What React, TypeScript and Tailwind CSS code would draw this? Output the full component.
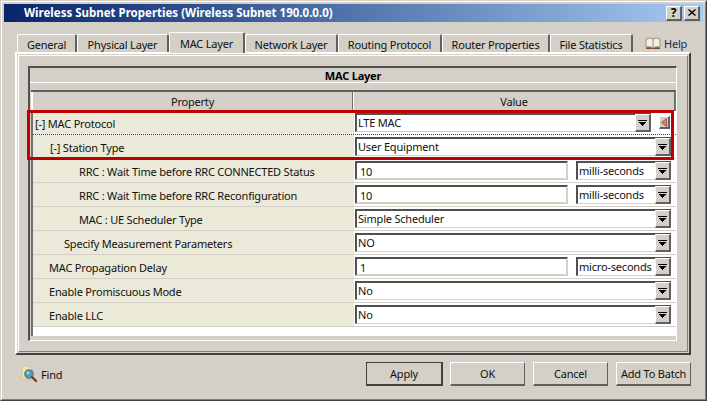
const font = "font-['Noto_Sans',sans-serif]";

function Arrow() {
  return (
    <svg width="9" height="6" viewBox="0 0 9 6" className="block">
      <rect x="0" y="0" width="9" height="1" fill="#000" />
      <path d="M1 2h7v1H7v1H6v1H5v1H4V5H3V4H2V3H1z" fill="#000" />
    </svg>
  );
}

function Raised({ className, children }: { className?: string; children?: React.ReactNode }) {
  return (
    <div className={`flex items-center justify-center border-t border-l border-t-white border-l-white border-r-2 border-b-2 border-r-[#606060] border-b-[#606060] bg-[#d4d0c8] ${className ?? ""}`}>
      {children}
    </div>
  );
}

function Select({ value, className }: { value: string; className?: string }) {
  return (
    <div className={`flex h-[19px] items-stretch border-t-2 border-l-2 border-t-[#505050] border-l-[#505050] border-b border-b-[#d4d0c8] bg-white ${className ?? ""}`}>
      <span className="flex-1 truncate pl-px leading-[16px] text-[#111]">{value}</span>
      <Raised className="my-[-1px] w-[16px] shrink-0"><Arrow /></Raised>
    </div>
  );
}

function Input({ value }: { value: string }) {
  return (
    <div className="h-[19px] w-[213px] shrink-0 border-t-2 border-l-2 border-t-[#505050] border-l-[#505050] border-r-2 border-b-2 border-r-[#d4d0c8] border-b-[#d4d0c8] bg-white pl-[3px] leading-[18px] text-[#111]">
      {value}
    </div>
  );
}

type Row = {
  label: string;
  indent: number;
  value: string;
  unit?: string;
  kind?: "protocol";
};

const rows: Row[] = [
  { label: "[-] MAC Protocol", indent: 2, value: "LTE MAC", kind: "protocol" },
  { label: "[-] Station Type", indent: 17, value: "User Equipment" },
  { label: "RRC : Wait Time before RRC CONNECTED Status", indent: 46, value: "10", unit: "milli-seconds" },
  { label: "RRC : Wait Time before RRC Reconfiguration", indent: 46, value: "10", unit: "milli-seconds" },
  { label: "MAC : UE Scheduler Type", indent: 46, value: "Simple Scheduler" },
  { label: "Specify Measurement Parameters", indent: 31, value: "NO" },
  { label: "MAC Propagation Delay", indent: 16, value: "1", unit: "micro-seconds" },
  { label: "Enable Promiscuous Mode", indent: 16, value: "No" },
  { label: "Enable LLC", indent: 16, value: "No" },
];

const tabs = [
  { name: "General", w: "w-[60px]" },
  { name: "Physical Layer", w: "w-[92px]" },
  { name: "MAC Layer", w: "w-[76px]", active: true },
  { name: "Network Layer", w: "w-[93px]" },
  { name: "Routing Protocol", w: "w-[104px]" },
  { name: "Router Properties", w: "w-[108px]" },
  { name: "File Statistics", w: "w-[83px]" },
];

function BookIcon() {
  return (
    <svg width="16" height="14" viewBox="0 0 16 14">
      <path d="M1 11 L1 3 Q5 1 8 3 Q11 1 15 3 L15 11 Q11 10 8 12 Q5 10 1 11z" fill="#f4efe0" stroke="#8a7a66" strokeWidth="0.8" />
      <path d="M8 3v9" stroke="#9a8c7a" strokeWidth="1" />
      <path d="M1 11.5 Q5 10.5 8 12.5 Q11 10.5 15 11.5 L15 13 L1 13z" fill="#7a4a2c" />
    </svg>
  );
}

function FindIcon() {
  return (
    <svg width="17" height="18" viewBox="0 0 17 18">
      <path d="M1 1h7l3 3v10H1z" fill="#f3e3b0" stroke="#c8c0a0" strokeWidth="0.8" />
      <circle cx="8" cy="9" r="4.2" fill="#4f9fb4" stroke="#5a7f8c" strokeWidth="1.3" />
      <circle cx="7" cy="8" r="1.4" fill="#a8dbe6" />
      <path d="M11 12l4 4" stroke="#7a3d1a" strokeWidth="2.4" strokeLinecap="round" />
    </svg>
  );
}

function DialogButton({ label, primary }: { label: string; primary?: boolean }) {
  return (
    <div
      className={`flex h-[24px] items-center justify-center bg-[#d4d0c8] text-[#111] ${
        primary
          ? "mr-[-1px] w-[77px] border border-t-[#404040] border-l-[#404040] border-r-2 border-b-2 border-r-[#404040] border-b-[#404040]"
          : "w-[75px] border-t border-l border-t-white border-l-white border-r border-b-2 border-r-[#606060] border-b-[#606060]"
      }`}
    >
      {label}
    </div>
  );
}

export default function App() {
  return (
    <div className={`${font} h-[401px] w-[707px] overflow-hidden border border-[#d4d0c8] border-r-[#404040] border-b-[#404040] bg-[#d4d0c8] text-[11px] leading-none tracking-[-0.2px] text-[#111]`}>
      <div className="flex h-full flex-col border border-white border-r-[#808080] border-b-[#808080] p-[2px]">
        <div className="flex h-[18px] shrink-0 items-center bg-gradient-to-r from-[#0a246a] to-[#a6caf0] pr-[3px] pl-[20px]">
          <span className="flex-1 text-[11.5px] font-bold tracking-normal text-white">Wireless Subnet Properties (Wireless Subnet 190.0.0.0)</span>
          <Raised className="h-[15px] w-[16px] text-[12px] font-bold text-black">?</Raised>
          <Raised className="ml-[2px] h-[15px] w-[16px]">
            <svg width="8" height="7" viewBox="0 0 8 7">
              <path d="M0.5 0.5L7.5 6.5M7.5 0.5L0.5 6.5" stroke="#000" strokeWidth="1.4" />
            </svg>
          </Raised>
        </div>

        <div className="mt-[11px] flex h-[19px] shrink-0 items-end pl-[13px]">
          {tabs.map((tab) => (
            <div
              key={tab.name}
              className={`relative z-10 flex items-center justify-center rounded-t-[2px] border-t border-l border-t-white border-l-white border-r-2 border-r-[#606060] bg-[#d4d0c8] ${tab.w} ${
                tab.active ? "mb-[-1px] h-[21px]" : "h-[18px] pt-[2px]"
              }`}
            >
              {tab.name}
            </div>
          ))}
          <div className="ml-[12px] flex items-center gap-[3px] pb-[2px]">
            <BookIcon />
            <span className="text-[#1a2a50]">Help</span>
          </div>
        </div>

        <div className="ml-[11px] h-[303px] w-[676px] shrink-0 border-t-2 border-l-2 border-t-white border-l-white border-r-2 border-b-2 border-r-[#404040] border-b-[#404040] p-px">
          <div className="h-full w-full border border-white border-r-[#808080] border-b-[#808080] pt-[10px] pr-[9px] pl-[9px]">
            <div className="relative h-[275px] w-[649px] border-t-2 border-l-2 border-t-[#505050] border-l-[#505050] border-r border-b border-r-white border-b-white">
              <div className="flex h-[15px] items-center justify-center border-b border-b-white font-bold text-black">MAC Layer</div>
              <div className="mt-[7px] ml-px flex h-[21px] border-t-2 border-t-[#606060] text-[#111]">
                <div className="flex w-[322px] items-center justify-center border-l-2 border-l-white border-r border-r-[#707070]">Property</div>
                <div className="flex flex-1 items-center justify-center border-l border-l-white border-r-2 border-r-[#707070]">Value</div>
              </div>
              <div className="ml-px border-l-2 border-l-[#707070] bg-white pb-[9px]">
                {rows.map((row, i) => (
                  <div key={row.label} className={`flex h-[24px] ${i === 0 ? "border-b border-dotted border-b-[#404040]" : "border-b border-b-[#d4d0c8]"}`}>
                    <div className="flex w-[320px] items-center bg-[#ebe9d8] pt-px" style={{ paddingLeft: row.indent }}>
                      {row.label}
                    </div>
                    <div className="flex w-[321px] items-center gap-[8px] border-l border-l-[#ebe9d8] pr-[3px] pl-px">
                      {row.unit ? (
                        <>
                          <Input value={row.value} />
                          <Select value={row.unit} className="flex-1" />
                        </>
                      ) : row.kind === "protocol" ? (
                        <>
                          <Select value={row.value} className="flex-1" />
                          <Raised className="mr-px h-[13px] w-[11px] shrink-0">
                            <svg width="6" height="9" viewBox="0 0 6 9">
                              <path d="M5.5 0.5V8.5L0.5 4.5z" fill="#e87878" stroke="#8a3030" strokeWidth="0.7" />
                            </svg>
                          </Raised>
                        </>
                      ) : (
                        <Select value={row.value} className="flex-1" />
                      )}
                    </div>
                  </div>
                ))}
              </div>
              {/* red highlight over the first two rows */}
              <div className="pointer-events-none absolute top-[42px] left-[-3px] h-[50px] w-[647px] border-[3px] border-[#bf0000]" />
            </div>
          </div>
        </div>

        <div className="flex flex-1 items-center pr-[12px] pb-[4px] pl-[17px]">
          <FindIcon />
          <span className="ml-[3px] flex-1">Find</span>
          <div className="flex gap-[8px]">
            <DialogButton label="Apply" primary />
            <DialogButton label="OK" />
            <DialogButton label="Cancel" />
            <DialogButton label="Add To Batch" />
          </div>
        </div>
      </div>
    </div>
  );
}
